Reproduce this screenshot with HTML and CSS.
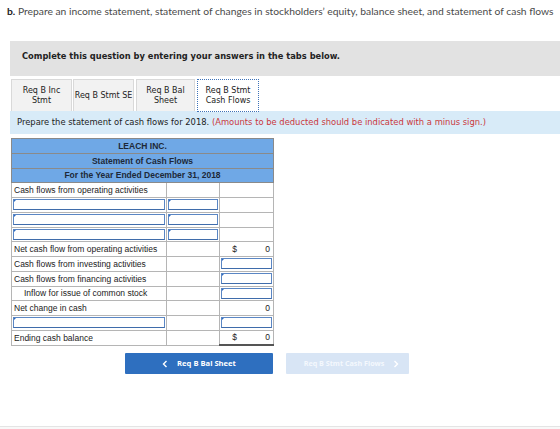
FILE: index.html
```html
<!doctype html>
<html>
<head>
<meta charset="utf-8">
<title>Statement of Cash Flows</title>
<link rel="stylesheet" href="styles.css">
</head>
<body>

<p class="q"><b>b.</b> Prepare an income statement, statement of changes in stockholders’ equity, balance sheet, and statement of cash flows</p>

<div class="wrap">
	<div class="note">Complete this question by entering your answers in the tabs below.</div>
	<ul class="tabs">
		<li class="t1">Req B Inc<br>Stmt</li>
		<li class="t2">Req B Stmt SE</li>
		<li class="t3">Req B Bal<br>Sheet</li>
		<li class="t4 on">Req B Stmt<br>Cash Flows</li>
	</ul>
	<div class="info">Prepare the statement of cash flows for 2018. <span>(Amounts to be deducted should be indicated with a minus sign.)</span></div>

	<table class="cf">
		<colgroup><col class="c1"><col class="c2"><col class="c3"></colgroup>
		<tr><th colspan="3">LEACH INC.</th></tr>
		<tr><th colspan="3">Statement of Cash Flows</th></tr>
		<tr><th colspan="3">For the Year Ended December 31, 2018</th></tr>
		<tr><td>Cash flows from operating activities</td><td></td><td></td></tr>
		<tr><td class="inp"><div></div></td><td class="inp"><div></div></td><td></td></tr>
		<tr><td class="inp"><div></div></td><td class="inp"><div></div></td><td></td></tr>
		<tr><td class="inp"><div></div></td><td class="inp"><div></div></td><td></td></tr>
		<tr><td>Net cash flow from operating activities</td><td></td><td class="num"><span>$</span>0</td></tr>
		<tr><td>Cash flows from investing activities</td><td></td><td class="inp"><div></div></td></tr>
		<tr><td>Cash flows from financing activities</td><td></td><td class="inp"><div></div></td></tr>
		<tr><td class="ind">Inflow for issue of common stock</td><td></td><td class="inp"><div></div></td></tr>
		<tr><td>Net change in cash</td><td></td><td class="num">0</td></tr>
		<tr><td class="inp"><div></div></td><td></td><td class="inp"><div></div></td></tr>
		<tr><td>Ending cash balance</td><td></td><td class="num total"><span>$</span>0</td></tr>
	</table>

	<div class="nav">
		<a class="prev"><svg width="6" height="8" viewBox="0 0 6 8"><path d="M4.5 1 L1.5 4 L4.5 7" fill="none" stroke="#fff" stroke-width="1.4"/></svg>Req B Bal Sheet</a>
		<a class="next">Req B Stmt Cash Flows<svg width="6" height="8" viewBox="0 0 6 8"><path d="M1.5 1 L4.5 4 L1.5 7" fill="none" stroke="#fff" stroke-width="1.4"/></svg></a>
	</div>
</div>

<div class="foot"></div>

</body>
</html>
```

FILE: styles.css
```css
*{ margin:0; padding:0; list-style:none; box-sizing:border-box;}
body{ background:#fff; color:#222;}

.q{ padding:5px 0 0 7px; height:17px; font:10.3px/12px Lato,"Open Sans",sans-serif; color:#4a4a4a; white-space:nowrap;}
.q b{ color:#222;}

.wrap{ margin:24px 0 0 10px;}

.note{ height:35px; padding:9px 0 0 12px; background:#e2e2e2; font:bold 8.3px/12px "DejaVu Sans",Verdana,sans-serif; color:#222;}

.tabs{ display:flex; gap:1px; margin:3px 0 0 1px; height:32px;}
.tabs li{ display:flex; align-items:center; justify-content:center; text-align:center; height:32px;
	background:#f2f2f2; border:1px solid #d9d9d9; border-bottom:none;
	font:8px/10px "DejaVu Sans",Verdana,sans-serif; color:#222; white-space:nowrap;}
.tabs .t1{ width:61px;}
.tabs .t2{ width:61px;}
.tabs .t3{ width:59px; margin-left:1px;}
.tabs .t4{ width:62px; margin-left:1px;}
.tabs li.on{ background:#fff; border:1px dotted #3d72b8; height:33px; position:relative;}

.info{ height:23px; padding-left:7px; background:#d8ebf8; font:8.4px/23px "DejaVu Sans",Verdana,sans-serif; color:#222; white-space:nowrap;}
.info span{ color:#c9373c;}

.cf{ margin:4px 0 0 1px; border-collapse:collapse; width:263px; font:8.5px/10px "Liberation Sans",Arial,sans-serif; color:#222;}
.cf .c1{ width:155px;}
.cf .c2{ width:54px;}
.cf .c3{ width:54px;}
.cf tr{ height:14.75px;}
.cf th{ padding:0; background:#6fa8e6; border:1px solid #8a8a8a; font-weight:bold; color:#1d2838; text-align:center;}
.cf td{ padding:0 2px; border:1px solid #b5b5b5; white-space:nowrap;}
.cf td.ind{ padding-left:12px;}
.cf td.num{ text-align:right; padding-right:3px;}
.cf td.num span{ float:left; margin-left:10px;}
.cf td.total{ border-bottom:2px solid #555;}
.cf td.inp{ padding:1px;}
.cf td.inp div{ position:relative; height:11px; border:1px solid #5a86c4; border-bottom-color:#3f6cab; background:#fff;}
.cf td.inp div:before{ content:""; position:absolute; left:0; top:0; border-left:2px solid #2b69c0; border-bottom:2px solid transparent;}

.nav{ display:flex; gap:13px; margin:7px 0 0 115px;}
.nav a{ display:flex; align-items:center; justify-content:center; gap:9px; height:21px; border-radius:1px;
	font:bold 7.6px/21px "Open Sans",Lato,sans-serif; color:#fff;}
.nav .prev{ width:148px; background:#2e6fbf;}
.nav .next{ width:123px; background:#d8e5f5; padding-left:8px; color:#f4f8fd; font-size:7.2px;}

.foot{ margin-top:52px; height:12px; border-top:1px solid #e4e4e4; background:#f8f8f8;}
```
